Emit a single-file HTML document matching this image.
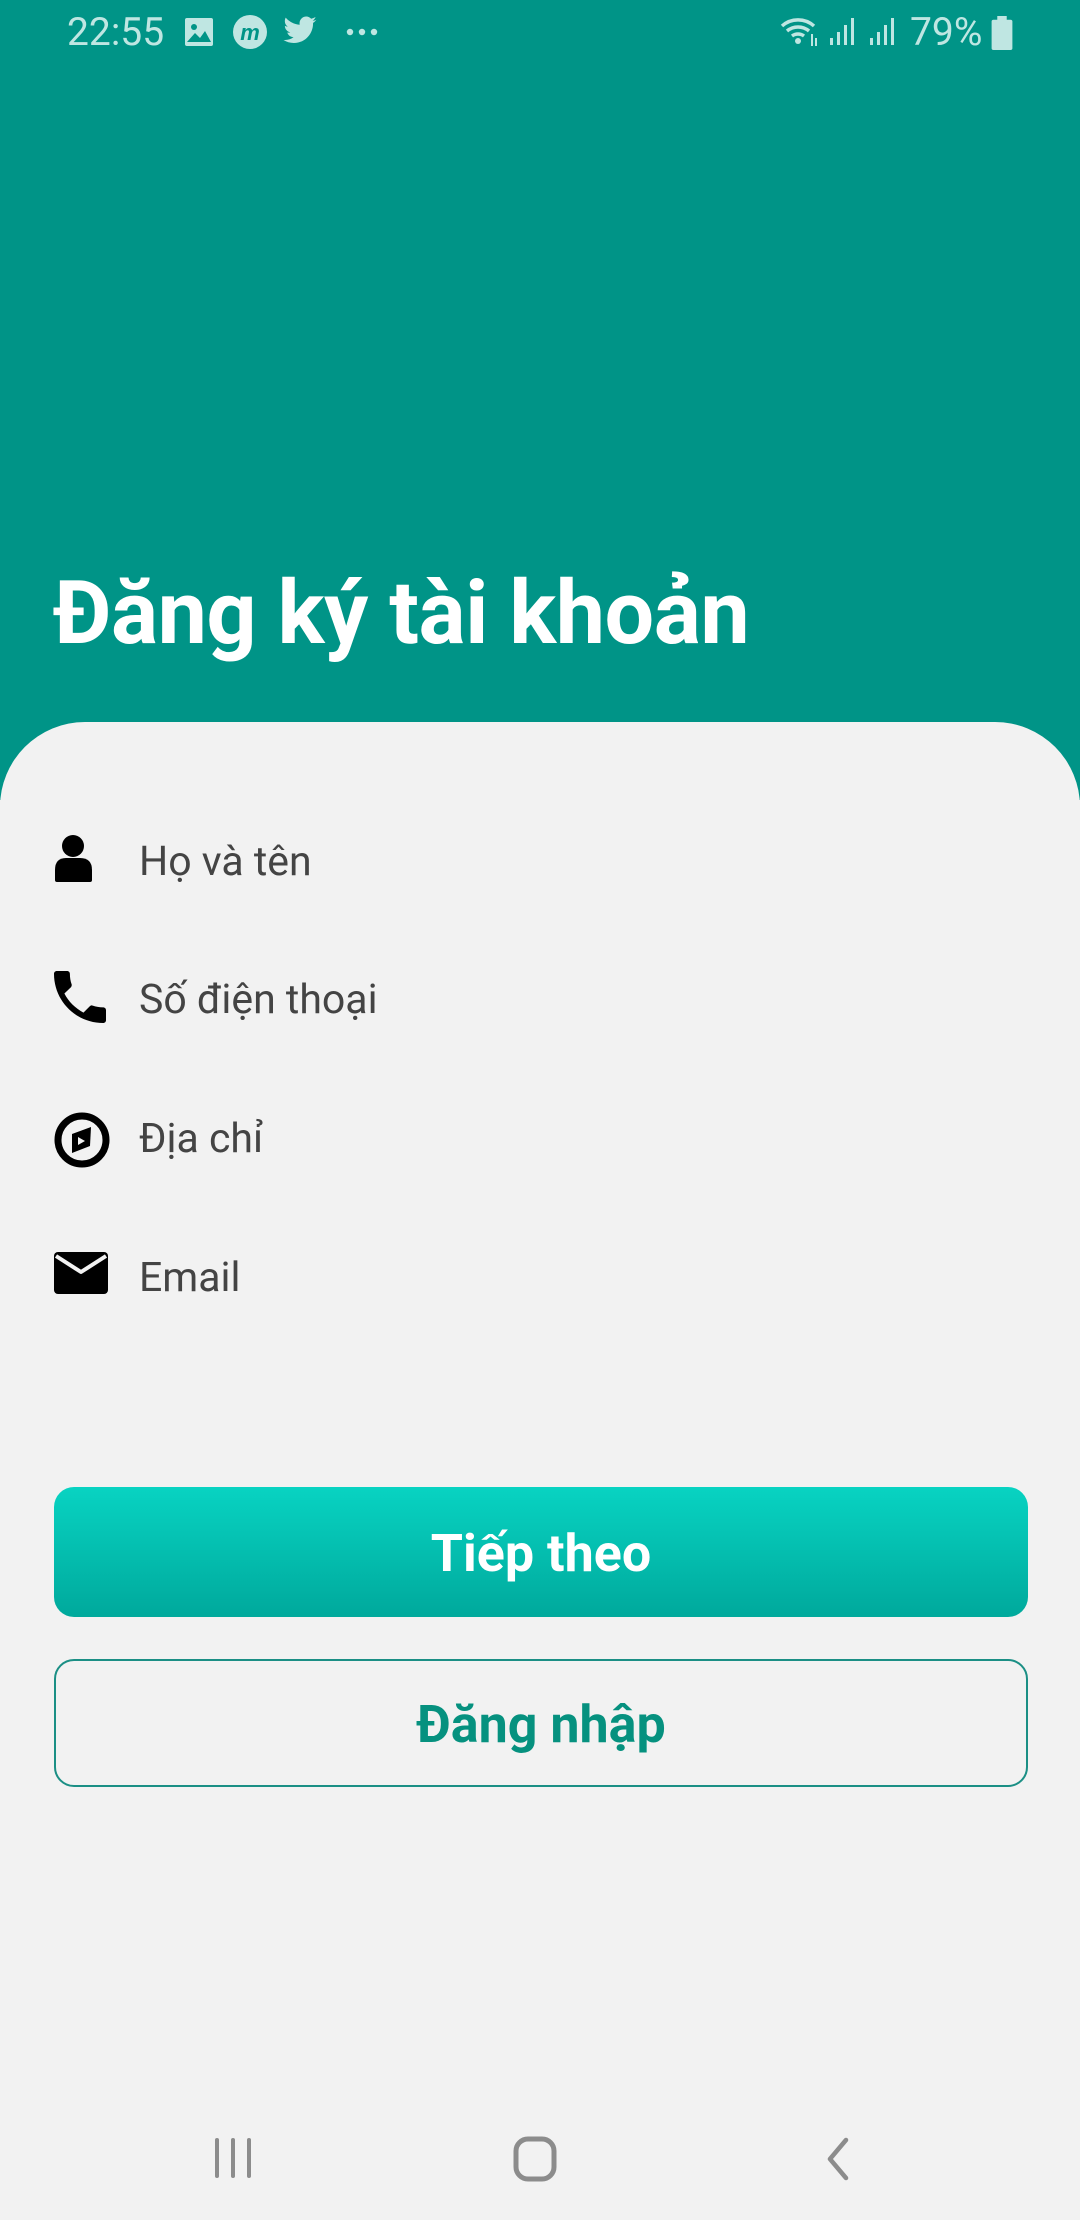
<!DOCTYPE html>
<html><head><meta charset="utf-8">
<style>
*{margin:0;padding:0;box-sizing:border-box}
body{width:1080px;height:2220px;overflow:hidden;background:#f2f2f2;font-family:"Roboto","Liberation Sans",sans-serif;position:relative}
.top{position:absolute;left:0;top:0;width:1080px;height:800px;background:#009487}
.card{position:absolute;left:0;top:722px;width:1080px;height:1498px;background:#f2f2f2;border-radius:85px 85px 0 0}
.sb{position:absolute;top:9px;color:#bfe6e2;font-size:39px}
h1{position:absolute;left:53px;top:562px;color:#fff;font-size:88px;font-weight:bold;letter-spacing:-0.5px}
.row{position:absolute;left:0;width:1080px;height:60px}
.row span{position:absolute;left:139px;top:5px;font-size:41px;color:#444}
.row svg{position:absolute;left:54px}
.btn{position:absolute;left:54px;width:974px;border-radius:20px;text-align:center;font-weight:bold;font-size:52px}
</style></head><body>
<div class="top"></div>
<div class="sb" style="left:67px">22:55</div>
<svg style="position:absolute;left:184px;top:17px" width="30" height="30" viewBox="0 0 30 30"><rect x="1" y="1" width="28" height="28" rx="2" fill="#bfe6e2"/><circle cx="10" cy="10" r="3" fill="#009487"/><path d="M3 25 L11 16 L16 21 L21 14 L27 25Z" fill="#009487"/></svg>
<svg style="position:absolute;left:232px;top:14px" width="36" height="36" viewBox="0 0 36 36"><circle cx="18" cy="18" r="17" fill="#bfe6e2"/><text x="18" y="26" font-size="22" font-style="italic" font-weight="bold" text-anchor="middle" fill="#009487" font-family="Liberation Sans">m</text></svg>
<svg style="position:absolute;left:282px;top:15px" width="36" height="32" viewBox="0 0 24 20"><path d="M23 2.5c-.8.4-1.7.6-2.6.7.9-.6 1.6-1.4 2-2.5-.9.5-1.9.9-2.9 1.1C18.6.9 17.4.3 16.2.3c-2.5 0-4.5 2-4.5 4.5 0 .4 0 .7.1 1C8 5.6 4.7 3.8 2.5 1.1c-.4.7-.6 1.4-.6 2.3 0 1.6.8 2.9 2 3.7-.7 0-1.4-.2-2-.6 0 2.2 1.6 4 3.6 4.4-.4.1-.8.2-1.2.2-.3 0-.6 0-.8-.1.6 1.8 2.2 3.1 4.2 3.1-1.5 1.2-3.5 1.9-5.6 1.9H1c2 1.3 4.4 2 6.9 2 8.3 0 12.8-6.9 12.8-12.8v-.6c.9-.6 1.7-1.4 2.3-2.3z" fill="#bfe6e2"/></svg>
<svg style="position:absolute;left:346px;top:28px" width="32" height="8"><circle cx="4" cy="4" r="3.2" fill="#bfe6e2"/><circle cx="16" cy="4" r="3.2" fill="#bfe6e2"/><circle cx="28" cy="4" r="3.2" fill="#bfe6e2"/></svg>
<svg style="position:absolute;left:780px;top:14px" width="40" height="34" viewBox="0 0 40 34"><path d="M2 12 A24 24 0 0 1 34 12 M7 17 A17 17 0 0 1 29 17 M12 22 A10 10 0 0 1 24 22" stroke="#bfe6e2" stroke-width="3.5" fill="none"/><circle cx="18" cy="27" r="3" fill="#bfe6e2"/><path d="M32 20v12M36 24v8" stroke="#bfe6e2" stroke-width="2"/></svg>
<svg style="position:absolute;left:828px;top:16px" width="30" height="30" viewBox="0 0 30 30"><rect x="2" y="22" width="3" height="7" fill="#bfe6e2"/><rect x="9" y="16" width="3" height="13" fill="#bfe6e2"/><rect x="16" y="9" width="3" height="20" fill="#bfe6e2"/><rect x="23" y="2" width="3" height="27" fill="#bfe6e2"/></svg>
<svg style="position:absolute;left:868px;top:16px" width="30" height="30" viewBox="0 0 30 30"><rect x="2" y="22" width="3" height="7" fill="#bfe6e2"/><rect x="9" y="16" width="3" height="13" fill="#bfe6e2"/><rect x="16" y="9" width="3" height="20" fill="#bfe6e2"/><rect x="23" y="2" width="3" height="27" fill="#bfe6e2"/></svg>
<div class="sb" style="left:910px">79%</div>
<svg style="position:absolute;left:990px;top:16px" width="24" height="34" viewBox="0 0 24 36"><rect x="7" y="0" width="10" height="5" fill="#bfe6e2"/><rect x="1" y="4" width="22" height="32" rx="2" fill="#bfe6e2"/></svg>

<div class="card"></div>
<h1>Đăng ký tài khoản</h1>

<div class="row" style="top:833px"><svg width="40" height="48" viewBox="0 0 40 48" style="top:1px"><circle cx="19" cy="12" r="11" fill="#000"/><path d="M1 46 V36 Q1 24 12 24 L26 24 Q38 24 38 36 V46 Q38 48 36 48 H3 Q1 48 1 46Z" fill="#000"/></svg><span>Họ và tên</span></div>
<div class="row" style="top:971px"><svg width="52" height="52" viewBox="3 3 18 18" style="top:0px"><path d="M6.6 10.8c1.4 2.8 3.8 5.1 6.6 6.6l2.2-2.2c.3-.3.7-.4 1-.2 1.1.4 2.3.6 3.6.6.6 0 1 .4 1 1V20c0 .6-.4 1-1 1-9.4 0-17-7.6-17-17 0-.6.4-1 1-1h3.5c.6 0 1 .4 1 1 0 1.3.2 2.5.6 3.6.1.3 0 .7-.2 1L6.6 10.8z" fill="#000"/></svg><span>Số điện thoại</span></div>
<div class="row" style="top:1110px"><svg width="56" height="56" viewBox="0 0 56 56" style="top:2px"><circle cx="28" cy="28" r="24" stroke="#000" stroke-width="7" fill="none"/><path d="M18 22 L37 15 L36 34 L18 41Z" fill="#000"/><path d="M24 25 L31 29 L24 33Z" fill="#f2f2f2"/></svg><span>Địa chỉ</span></div>
<div class="row" style="top:1249px"><svg width="54" height="42" viewBox="0 0 54 42" style="top:3px"><rect x="0" y="0" width="54" height="42" rx="4" fill="#000"/><path d="M2 4 L27 20 L52 4" stroke="#f2f2f2" stroke-width="4" fill="none" stroke-linejoin="round"/></svg><span>Email</span></div>

<div class="btn" style="top:1487px;height:130px;line-height:134px;background:linear-gradient(#08d3c2,#00a99c);color:#fff">Tiếp theo</div>
<div class="btn" style="top:1659px;height:128px;line-height:128px;border:2px solid #1b8f85;color:#06917f">Đăng nhập</div>

<svg style="position:absolute;left:205px;top:2138px" width="60" height="42"><rect x="10" y="0" width="4" height="40" rx="2" fill="#8c8c8c"/><rect x="26" y="0" width="4" height="40" rx="2" fill="#8c8c8c"/><rect x="42" y="0" width="4" height="40" rx="2" fill="#8c8c8c"/></svg>
<svg style="position:absolute;left:512px;top:2136px" width="46" height="46"><rect x="4" y="3" width="38" height="40" rx="12" stroke="#8c8c8c" stroke-width="5" fill="none"/></svg>
<svg style="position:absolute;left:822px;top:2136px" width="30" height="46"><path d="M24 4 L8 23 L24 42" stroke="#8c8c8c" stroke-width="4.5" fill="none" stroke-linecap="round" stroke-linejoin="round"/></svg>
</body></html>
